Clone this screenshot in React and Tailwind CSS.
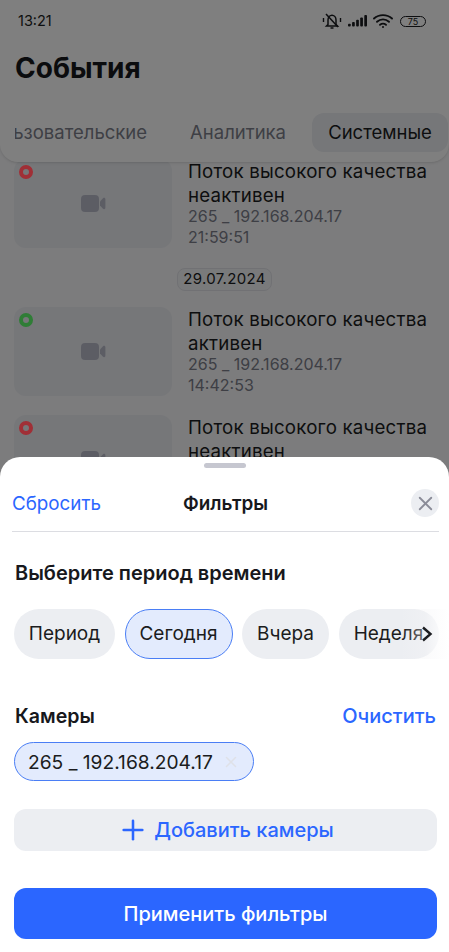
import { X, Plus } from "lucide-react"

function CameraIcon() {
  return (
    <svg width="25" height="18" viewBox="0 0 25 18" fill="#b9bbc9">
      <rect x="0" y="0" width="18" height="17" rx="4" />
      <path d="M19 6.5 L22 3.2 C23.2 2.2 24.4 3 24.4 4.4 V12.6 C24.4 14 23.2 14.8 22 13.8 L19 10.5 Z" />
    </svg>
  )
}

function EventRow({ title, status, ip, time, dot }) {
  return (
    <div className="flex gap-4">
      <div className="relative flex h-[89px] w-[158px] shrink-0 items-center justify-center rounded-xl bg-[#eceef2]">
        <span className={`absolute left-[5px] top-[6px] z-[25] h-[14px] w-[14px] rounded-full border-4 ${dot}`} />
        <CameraIcon />
      </div>
      <div className="mt-[1px] min-w-0">
        <p className="text-[18.7px] leading-[24px] tracking-[0.2px] text-[#1b1c20]">{title}</p>
        <p className="text-[18.7px] leading-[24px] tracking-[0.2px] text-[#1b1c20]">{status}</p>
        <p className="-mt-[2px] text-[16px] leading-[21px] text-[#7c7e8a]">{ip}</p>
        <p className="text-[16px] leading-[21px] text-[#7c7e8a]">{time}</p>
      </div>
    </div>
  )
}

function StatusIcons() {
  return (
    <div className="flex items-center gap-[6px]">
      <svg width="20" height="18" viewBox="0 0 20 18" fill="none" stroke="#1b1c20" strokeWidth="1.5">
        <path d="M6 12.5 V8 C6 5 8 3.2 10 3.2 C12 3.2 14 5 14 8 V12.5 L15.5 14 H4.5 Z" />
        <path d="M8.5 16 H11.5" />
        <path d="M4 2 L16 15" />
        <path d="M1.5 6 V10 M18.5 6 V10" strokeWidth="1.4" />
      </svg>
      <svg width="19" height="14" viewBox="0 0 21 14" fill="#1b1c20">
        <rect x="0" y="10" width="3" height="3" rx="1" />
        <rect x="4.5" y="8" width="3" height="5" rx="1" />
        <rect x="9" y="5.5" width="3" height="7.5" rx="1" />
        <rect x="13.5" y="3" width="3" height="10" rx="1" />
        <rect x="18" y="0.5" width="3" height="12.5" rx="1" />
      </svg>
      <svg width="20" height="16" viewBox="0 0 20 16" fill="none" stroke="#1b1c20" strokeWidth="1.9" strokeLinecap="round">
        <path d="M1 5.5 C6 1 14 1 19 5.5" />
        <path d="M4 8.8 C7.5 5.6 12.5 5.6 16 8.8" />
        <path d="M7 11.8 C8.8 10.4 11.2 10.4 13 11.8" />
        <circle cx="10" cy="14" r="1" fill="#1b1c20" stroke="none" />
      </svg>
      <div className="ml-[1px] flex h-[11px] w-[26px] items-center justify-center rounded-full border border-[#1b1c20] text-[9px] leading-none text-[#1b1c20]">
        75
      </div>
    </div>
  )
}

export default function App() {
  return (
    <div className="relative h-[952px] w-[449px] overflow-hidden bg-[#f8f8fa] font-['Inter',sans-serif]">
      <div className="relative z-10 h-[162px] rounded-b-[18px] bg-white shadow-sm">
        <div className="flex items-center justify-between pl-[18px] pr-[23px] pt-[12px]">
          <span className="text-[14.5px] leading-[18px] text-[#1b1c20]">13:21</span>
          <StatusIcons />
        </div>
        <h1 className="mt-[21px] pl-[15px] text-[28px] font-bold leading-[34px] text-[#17181c]">События</h1>
        <div className="ml-[15px] mt-[28px] flex h-[39px] items-center justify-end overflow-hidden text-[18.5px]">
          <span className="mr-[43px] shrink-0 text-[#7c7e8a]">Пользовательские</span>
          <span className="mr-[26px] shrink-0 text-[#7c7e8a]">Аналитика</span>
          <span className="mr-[1px] flex h-[39px] w-[136px] shrink-0 items-center justify-center rounded-xl bg-[#eceef2] text-[#1b1c20]">
            Системные
          </span>
        </div>
      </div>

      <div className="-mt-[3px] px-[14px]">
        <EventRow title="Поток высокого качества" status="неактивен" ip="265 _ 192.168.204.17" time="21:59:51" dot="border-[#a02f36]" />
        <div className="flex justify-center pb-[16px] pt-[20px]">
          <span className="flex h-[23px] items-center rounded-lg border border-[#e2e3e9] bg-[#f3f4f7] px-[5px] text-[15px] tracking-[0.3px] text-[#1b1c20]">
            29.07.2024
          </span>
        </div>
        <EventRow title="Поток высокого качества" status="активен" ip="265 _ 192.168.204.17" time="14:42:53" dot="border-[#2f7d36]" />
        <div className="mt-[19px]">
          <EventRow title="Поток высокого качества" status="неактивен" ip="265 _ 192.168.204.17" time="11:20:07" dot="border-[#a02f36]" />
        </div>
      </div>

      {/* dimmed backdrop behind the sheet */}
      <div className="absolute inset-0 z-20 bg-black/50" />

      <div className="absolute inset-x-0 bottom-0 z-30 h-[495px] rounded-t-[20px] bg-white">
        <div className="flex justify-center pt-[6px]">
          <div className="h-[5px] w-[42px] rounded-full bg-[#c6c7d0]" />
        </div>
        <div className="ml-[12px] mr-[10px] mt-[21px] flex h-[43px] items-start justify-between border-b border-[#dcdde2]">
          <span className="mt-[3px] w-[100px] text-[18.8px] leading-[24px] text-[#2b66ff]">Сбросить</span>
          <span className="mt-[3px] text-[18.9px] font-semibold leading-[24px] text-[#17181c]">Фильтры</span>
          <div className="flex w-[100px] justify-end">
            <span className="flex h-[28px] w-[28px] items-center justify-center rounded-full bg-[#eceef2]">
              <X size={23} color="#8a8c98" strokeWidth={1.9} />
            </span>
          </div>
        </div>

        <h2 className="mt-[29px] pl-[15px] text-[20px] font-semibold leading-[24px] text-[#17181c]">Выберите период времени</h2>

        <div className="relative mt-[24px] h-[50px] overflow-hidden pl-[14px]">
          <div className="flex gap-[9.5px] text-[19px] text-[#1b1c20]">
            <span className="flex h-[50px] w-[101px] shrink-0 items-center justify-center rounded-full bg-[#eceef2]">Период</span>
            <span className="flex h-[50px] w-[108px] shrink-0 items-center justify-center rounded-full border-[1.5px] border-[#4a7ef5] bg-[#e3ebfd]">Сегодня</span>
            <span className="flex h-[50px] w-[87px] shrink-0 items-center justify-center rounded-full bg-[#eceef2]">Вчера</span>
            <span className="flex h-[50px] w-[100px] shrink-0 items-center justify-center rounded-full bg-[#eceef2]">Неделя</span>
          </div>
          <div className="absolute inset-y-0 right-0 w-[48px] bg-gradient-to-r from-[#eceef2]/0 via-[#f4f4f6]/40 to-white" />
          <svg className="absolute right-[16px] top-[17px]" width="12" height="16" viewBox="0 0 12 16" fill="none" stroke="#1b1c20" strokeWidth="2.4">
            <path d="M2 1.5 L9.5 8 L2 14.5" />
          </svg>
        </div>

        <div className="mt-[45px] flex items-center justify-between pl-[15px] pr-[13px]">
          <span className="text-[19.6px] font-semibold leading-[24px] text-[#17181c]">Камеры</span>
          <span className="text-[20px] font-medium leading-[24px] text-[#2b66ff]">Очистить</span>
        </div>

        <div className="mt-[14px] pl-[14px]">
          <div className="flex h-[39px] w-[240px] items-center justify-between rounded-full border-[1.5px] border-[#4a7ef5] bg-[#e3ebfd] pl-[13px] pr-[13px]">
            <span className="pt-[2px] text-[19.2px] text-[#1b1c20]">265 _ 192.168.204.17</span>
            <X size={18} color="#dfe1e8" strokeWidth={2} />
          </div>
        </div>

        <button className="mx-[14px] mt-[28px] flex h-[42px] w-[423px] items-center justify-center gap-[5px] rounded-xl bg-[#eceef2] text-[20px] font-medium text-[#2b66ff]">
          <Plus size={32} strokeWidth={1.9} />
          Добавить камеры
        </button>

        <button className="mx-[14px] mt-[37px] flex h-[51px] w-[423px] items-center justify-center rounded-xl bg-[#2b66ff] text-[20px] font-medium text-white">
          Применить фильтры
        </button>
      </div>
    </div>
  )
}
